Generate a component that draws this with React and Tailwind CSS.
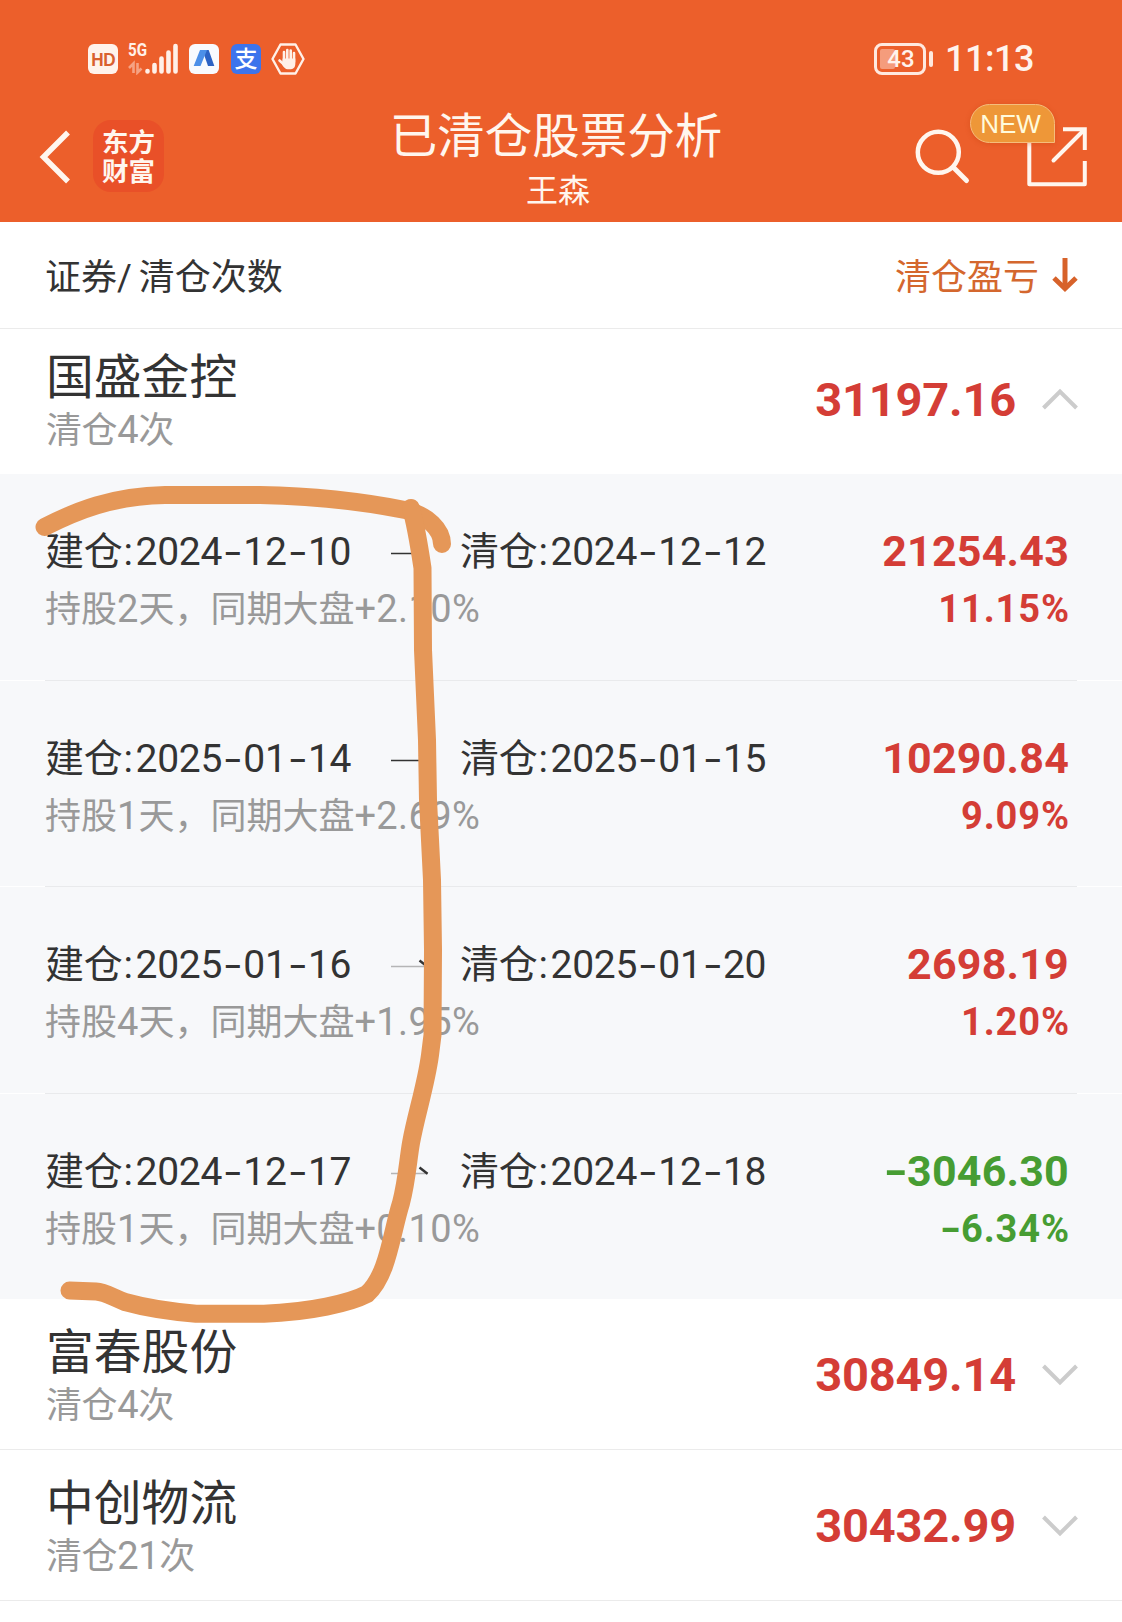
import clsx from 'clsx';

const TRADES = [
  { open: '2024-12-10', close: '2024-12-12', days: 2, market: '+2.10%', profit: '21254.43', rate: '11.15%', line: '#333333' },
  { open: '2025-01-14', close: '2025-01-15', days: 1, market: '+2.69%', profit: '10290.84', rate: '9.09%', line: '#333333' },
  { open: '2025-01-16', close: '2025-01-20', days: 4, market: '+1.95%', profit: '2698.19', rate: '1.20%', line: '#b5b5b6' },
  { open: '2024-12-17', close: '2024-12-18', days: 1, market: '+0.10%', profit: '-3046.30', rate: '-6.34%', line: '#b5b5b6' },
];

// Hyphens take the same advance as a digit
const Dashed = ({ text, className }) =>
  text.split(/(-)/).map((part, i) =>
    part === '-' ? (
      <span key={i} className={clsx('inline-block text-center', className)}>-</span>
    ) : (
      part
    )
  );

const StatusBar = () => (
  <div className="flex h-[75px] items-end justify-between pl-[88px] pr-[88px]">
    <div className="flex h-8 items-center">
      <div className="flex size-[30px] items-center justify-center rounded-[6px] bg-[#fff3ec] font-['Liberation_Sans'] text-[19px] font-bold leading-none tracking-[-0.5px] text-[#d9602f]">
        <span className="scale-x-90">HD</span>
      </div>
      <div className="relative ml-[9px] h-8 w-[53px]">
        <span className="absolute left-[1px] top-[-1px] origin-left scale-x-[0.8] text-[19px] font-bold leading-[16px] text-[#fff0e8]">5G</span>
        <svg className="absolute inset-0" width="53" height="32" viewBox="0 0 53 32">
          <g fill="none" stroke="#f5a283" strokeWidth="2.600">
            <path d="M6.500 30V20.500l-4.500 4.500" />
            <path d="M10.500 20v9.500l4-4" />
          </g>
          <g stroke="#fff0e8" strokeWidth="4.600" strokeLinecap="round">
            <path d="M20.500 28v.5M27.500 22v6.500M34.500 15.500v13M41.500 9.500v19M48.500 3v25.500" />
          </g>
        </svg>
      </div>
      <svg className="ml-[9px]" width="30" height="30" viewBox="0 0 30 30">
        <rect width="30" height="30" rx="6" fill="#f8fafe" />
        <path d="M13.500 6h6.200L25.300 22H19l-3.500-10z" fill="#2c62c4" />
        <path d="M11 6h7l-6.500 16H4.700z" fill="#4c8fe8" />
      </svg>
      <div className="ml-3 flex size-[30px] items-center justify-center rounded-[6px] bg-[#3d74ec] text-[23px] font-medium leading-none text-white">
        支
      </div>
      <svg className="ml-[10px]" width="34" height="32" viewBox="0 0 34 32">
        <path d="M9.500 1.500h15L32.500 16l-8 14.500h-15L1.500 16z" fill="none" stroke="#fff0e8" strokeWidth="2.400" strokeLinejoin="round" />
        <g stroke="#fff0e8" strokeWidth="2.600" strokeLinecap="round" fill="none">
          <path d="M13 9v9M16.300 7v10M19.700 7.500v10M23 10v9M8.500 17.500l5 4.500" />
        </g>
        <path d="M11.700 15.500h12.600v5.500c0 3-1.800 5.200-4.300 5.200h-3.500c-2 0-3.400-1.400-5.500-4.700z" fill="#fff0e8" />
      </svg>
    </div>
    <div className="flex h-8 items-center">
      <div className="relative flex h-8 w-[52px] items-center justify-center rounded-[8px] border-[3px] border-[#ffe9df] text-[24px] font-medium leading-none text-[#fff3ec]">
        <span className="absolute left-[3px] top-[3px] h-5 w-[15px] rounded-[2px] bg-[#f59c7c]" />
        <span className="relative left-px">43</span>
      </div>
      <span className="ml-[3px] h-4 w-[4px] rounded-[2px] bg-[#ffe9df]" />
      <span className="ml-[12px] w-[89px] whitespace-nowrap text-[36px] font-medium leading-8 tracking-[-0.5px] text-[#fff3ec]">11:13</span>
    </div>
  </div>
);

const NavBar = () => (
  <div className="relative flex h-[147px] justify-between text-[#fff6ee]">
    <div className="flex pl-[38px] pt-[45px]">
      <svg className="mt-[9px]" width="34" height="56" viewBox="0 0 34 56" fill="none" stroke="#fff6ee" strokeWidth="5.500">
        <path d="M30 3.500L5.500 28 30 52.500" />
      </svg>
      <div className="ml-[21px] flex h-[72px] w-[71px] flex-col items-center justify-center rounded-[18px] bg-[#e95028] pt-[2px] text-[26.500px] font-bold leading-[29px]">
        <span>东方</span>
        <span>财富</span>
      </div>
    </div>
    <div className="absolute left-[356px] top-[30px] flex w-[400px] flex-col items-center">
      <h1 className="text-[47.500px] font-normal leading-[64px]">已清仓股票分析</h1>
      <span className="ml-[4px] mt-[2px] text-[32px] leading-10">王森</span>
    </div>
    <div className="relative w-[220px]">
      <svg width="220" height="147" viewBox="902 75 220 147" fill="none" stroke="#fff6ee" strokeWidth="4">
        <circle cx="938.300" cy="152.300" r="20.500" strokeWidth="4.500" />
        <path d="M953.500 167.500l13 13" strokeLinecap="round" strokeWidth="5" />
        <path d="M1029.300 142v42.300h55.500V161" strokeLinejoin="round" />
        <path d="M1063 129.300h21.800V150" />
        <path d="M1053.500 160.500l30-30" strokeLinecap="round" />
      </svg>
      <div className="absolute left-[68px] top-[29px] flex h-[39px] w-[85px] items-center justify-center rounded-[20px] rounded-br-none border border-[#f5bd7c] bg-[#ee9738] pr-1 font-['Liberation_Sans'] text-[26px] leading-none text-[#fffbdc] shadow-[0_1px_5px_rgba(190,60,10,0.35)]">
        NEW
      </div>
    </div>
  </div>
);

const Chevron = ({ up }) => (
  <svg width="36" height="24" viewBox="0 0 36 24" fill="none" stroke="#cccccc" strokeWidth="4">
    <path d={up ? 'M1.500 20L18 3.500 34.500 20' : 'M1.500 3L18 19.500 34.500 3'} />
  </svg>
);

const StockRow = ({ name, times, profit, expanded, className }) => (
  <div className={clsx('flex justify-between pl-[46px] pr-[44px]', className)}>
    <div>
      <div className="text-[47.800px] leading-[56px] text-[#333333]">{name}</div>
      <div className="-mt-px text-[36px] leading-[50px] tracking-[-0.4px] text-[#999999]">
        清仓<span className="text-[38px]">{times}</span>次
      </div>
    </div>
    <div className="flex h-[106px] items-center">
      <span className="mr-[26px] text-[47px] font-bold leading-[56px] tracking-[-0.2px] text-[#d43d36]">{profit}</span>
      <Chevron up={expanded} />
    </div>
  </div>
);

const TradeRow = ({ trade, last }) => {
  const loss = trade.profit.startsWith('-');
  return (
    <div>
      <div className={clsx('flex justify-between pl-[45px] pr-[52px] pt-[50px]', last ? 'h-[206px]' : 'h-[205.500px]')}>
        <div>
          <div className="flex h-[57px] items-center whitespace-nowrap text-[39px] leading-[57px] tracking-[-0.300px] text-[#333333]">
            <span className="w-[346px]">
              建仓<span className="ml-px mr-[3px]">:</span>
              <Dashed text={trade.open} className="w-[21.300px] origin-center scale-x-150" />
            </span>
            <svg className="mr-[30px] mt-px" width="39" height="16" viewBox="0 0 39 16" fill="none">
              <path d="M0 8.500h37" stroke={trade.line} strokeWidth="1.300" />
              <path d="M28.500 2.500l8 6.300" stroke="#333333" strokeWidth="2.400" />
            </svg>
            <span>
              清仓<span className="ml-px mr-[3px]">:</span>
              <Dashed text={trade.close} className="w-[21.300px] origin-center scale-x-150" />
            </span>
          </div>
          <div className="h-[57px] whitespace-nowrap text-[36px] leading-[57px] text-[#999999]">
            持股<span className="text-[38px]">{trade.days}</span>天，同期大盘
            <span className="text-[38px] tracking-[0.4px]">{trade.market}</span>
          </div>
        </div>
        <div className={clsx('-mt-px text-right font-bold', loss ? 'text-[#479d33]' : 'text-[#d43d36]')}>
          <div className="mr-px text-[43px] leading-[57px] tracking-[0.2px]">
            <Dashed text={trade.profit} className="w-[22px] scale-x-150" />
          </div>
          <div className="mt-px text-[38px] leading-[57px] tracking-[0.9px]">
            <Dashed text={trade.rate} className="w-[19px] scale-x-150" />
          </div>
        </div>
      </div>
      {!last && (
        <div className="h-px bg-white px-[45px]">
          <div className="h-px bg-[#e9eaec]" />
        </div>
      )}
    </div>
  );
};

// Freehand marker drawn over the list
const Marker = () => (
  <svg className="pointer-events-none absolute left-0 top-0" width="1122" height="1622" viewBox="0 0 1122 1622" fill="none" stroke="#e59758" strokeWidth="18" strokeLinecap="round" strokeLinejoin="round">
    <path d="M44.500 527C76 511 112 496 165 495H260C310 496 360 501 405 510C428 515 442 530 442 544" />
    <path d="M411 508C416 525 419 545 422.500 568L423 650L427 740L428 800L432 880L433 950L432.500 1035L430 1055C426 1085 416 1115 411 1143C408 1160 407 1180 401 1203C391 1235 388 1275 367 1294C350 1303 310 1312 264 1313.700H196C176 1312 150 1309 125 1302C112 1297 105 1292 96 1291.500L69.500 1290.500" />
  </svg>
);

const App = () => (
  <div className="relative h-[1622px] w-[1122px] overflow-hidden bg-white font-[Roboto,'Noto_Sans_CJK_SC',sans-serif]">
    <header className="h-[222px] bg-[#ec5f2b]">
      <StatusBar />
      <NavBar />
    </header>

    <div className="flex h-[107px] items-center justify-between border-b border-[#ebebeb] pl-[45px] pr-[44px] pt-[6px] text-[36px] leading-[52px]">
      <span className="text-[#333333]">证券/<span className="ml-[-2px]"> 清仓次数</span></span>
      <span className="flex items-center text-[#d4672e]">
        清仓盈亏
        <svg className="-mt-[6px] ml-[13px]" width="26" height="36" viewBox="0 0 26 36" fill="none" stroke="#d7622a" strokeWidth="5">
          <path d="M13 1v30" />
          <path d="M2 21L13 31.500 24 21" />
        </svg>
      </span>
    </div>

    <StockRow name="国盛金控" times="4" profit="31197.16" expanded className="h-[145px] pt-[21px] [&>div:last-child]:-mt-[3px]" />

    <div className="h-[825px] bg-[#f7f8fa]">
      {TRADES.map((trade, i) => (
        <TradeRow key={trade.open} trade={trade} last={i === TRADES.length - 1} />
      ))}
    </div>

    <StockRow name="富春股份" times="4" profit="30849.14" className="h-[151px] border-b border-[#ebebeb] pt-[26px] [&>div:last-child]:-mt-[3px]" />
    <StockRow name="中创物流" times="21" profit="30432.99" className="h-[151px] border-b border-[#ebebeb] pt-[26px] [&>div:last-child]:-mt-[3px]" />

    <Marker />
  </div>
);

export default App;
